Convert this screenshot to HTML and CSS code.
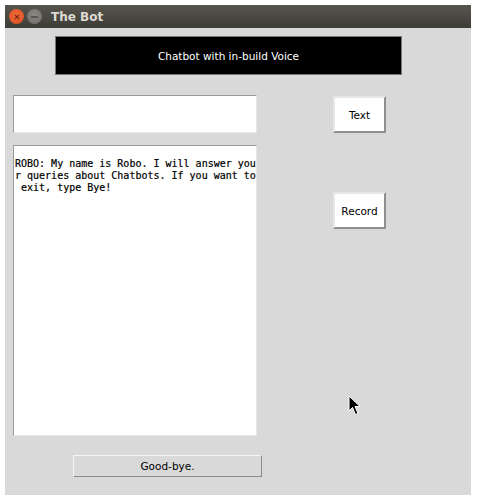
FILE: index.html
```html
<!DOCTYPE html>
<html>
<head>
<meta charset="utf-8">
<link rel="stylesheet" href="styles.css">
</head>
<body>
<div class="window">
  <div class="titlebar">
    <span class="wbtn close"><svg width="6" height="6" viewBox="0 0 6 6"><path d="M1 1L5 5M5 1L1 5" stroke="#7a2a10" stroke-width="1.1"/></svg></span>
    <span class="wbtn min"><svg width="7" height="2" viewBox="0 0 7 2"><path d="M0 1H7" stroke="#3a3a38" stroke-width="1.2"/></svg></span>
    <span class="title">The Bot</span>
  </div>
  <div class="content">
    <div class="banner">Chatbot with in-build Voice</div>
    <div class="main">
      <div class="left">
        <div class="entry"></div>
        <div class="textbox">
<pre class="log">

ROBO: My name is Robo. I will answer you
r queries about Chatbots. If you want to
 exit, type Bye!</pre>
        </div>
        <div class="byerow"><div class="bye">Good-bye.</div></div>
      </div>
      <div class="right">
        <div class="rbtn">Text</div>
        <div class="rbtn rec">Record</div>
      </div>
    </div>
    <svg class="cursor" width="14" height="21" viewBox="0 0 14 21"><path d="M1 1V16L4.5 12.5L7.5 19.5L10 18.5L7 11.5H12Z" fill="#000" stroke="#fff" stroke-width="1"/></svg>
  </div>
</div>
</body>
</html>
```

FILE: styles.css
```css
html, body { margin: 0; padding: 0; background: #ffffff; }
body { width: 480px; height: 501px; overflow: hidden; }
.window {
  margin: 5px 0 0 5px;
  width: 466px;
  height: 490px;
  display: flex;
  flex-direction: column;
  background: #d9d9d9;
}
.titlebar {
  height: 23px;
  flex: none;
  display: flex;
  align-items: center;
  background: linear-gradient(#58554e, #3d3c38);
  padding-left: 2px;
}
.wbtn {
  width: 15px; height: 15px; border-radius: 50%;
  display: flex; align-items: center; justify-content: center;
  margin-right: 1px;
}
.close { background: radial-gradient(circle at 50% 40%, #f26a3a, #d94c1e); margin-left: 2px; }
.min { background: radial-gradient(circle at 50% 40%, #8a8984, #6c6b67); margin-left: 2px; }
.title {
  margin-left: 8px;
  font-family: "DejaVu Sans", sans-serif;
  font-weight: bold;
  font-size: 12px;
  color: #dfdbd2;
}
.content { position: relative; flex: 1; }
.banner {
  margin: 8px 0 0 50px;
  width: 345px; height: 37px;
  background: #000;
  border: 1px solid #777;
  color: #fff;
  font-family: "DejaVu Sans", sans-serif;
  font-size: 10.5px;
  display: flex; align-items: center; justify-content: center;
}
.main {
  display: grid;
  grid-template-columns: 244px 53px;
  column-gap: 76px;
  margin: 20px 0 0 8px;
}
.left { display: flex; flex-direction: column; }
.entry {
  height: 36px;
  background: #fff;
  border: 1px solid #9a9a9a;
  border-right-color: #e8e8e8;
  border-bottom-color: #e8e8e8;
}
.textbox {
  margin-top: 12px;
  height: 289px;
  background: #fff;
  border: 1px solid #9a9a9a;
  border-right-color: #e8e8e8;
  border-bottom-color: #e8e8e8;
  overflow: hidden;
}
.log {
  margin: 0;
  padding: 0 0 0 1px;
  font-family: "DejaVu Sans Mono", monospace;
  font-size: 10px;
  line-height: 12px;
  color: #000;
  white-space: pre;
  -webkit-text-stroke: 0.2px #000;
}
.byerow { margin-top: 19px; padding-left: 60px; }
.bye {
  width: 187px; height: 20px;
  background: #d9d9d9;
  border: 1px solid #f4f4f4;
  border-right-color: #8a8a8a;
  border-bottom-color: #8a8a8a;
  font-family: "DejaVu Sans", sans-serif;
  font-size: 10.5px;
  color: #000;
  display: flex; align-items: center; justify-content: center;
}
.right { display: flex; flex-direction: column; padding-top: 1px; }
.rbtn {
  width: 49px; height: 33px;
  background: #fff;
  border: 2px solid #e6e6e6;
  border-right-color: #8e8e8e;
  border-bottom-color: #8e8e8e;
  font-family: "DejaVu Sans", sans-serif;
  font-size: 10.5px;
  color: #000;
  display: flex; align-items: center; justify-content: center;
}
.rec { margin-top: 59px; }
.cursor { position: absolute; left: 343px; top: 367px; }
```
